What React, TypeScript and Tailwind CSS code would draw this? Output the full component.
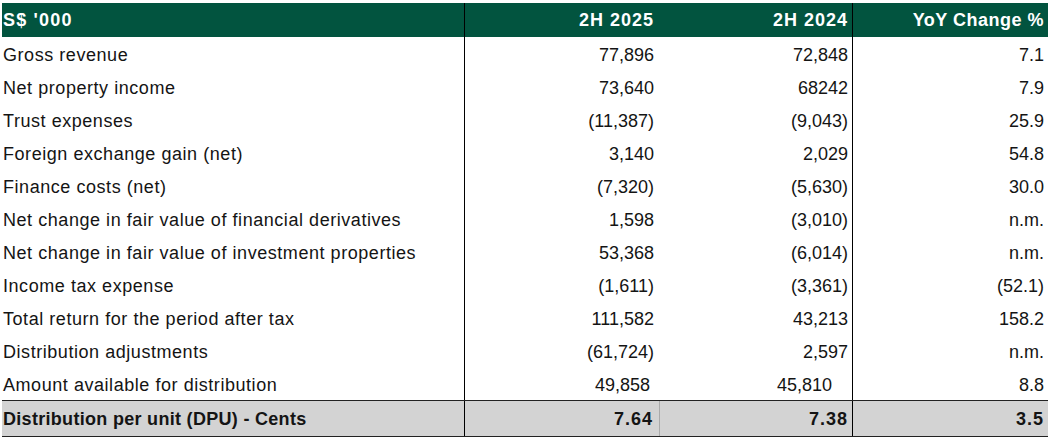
const rows: [string, string, string, string, string?][] = [
  ['Gross revenue', '77,896', '72,848', '7.1'],
  ['Net property income', '73,640', '68242', '7.9'],
  ['Trust expenses', '(11,387)', '(9,043)', '25.9'],
  ['Foreign exchange gain (net)', '3,140', '2,029', '54.8'],
  ['Finance costs (net)', '(7,320)', '(5,630)', '30.0'],
  ['Net change in fair value of financial derivatives', '1,598', '(3,010)', 'n.m.'],
  ['Net change in fair value of investment properties', '53,368', '(6,014)', 'n.m.'],
  ['Income tax expense', '(1,611)', '(3,361)', '(52.1)'],
  ['Total return for the period after tax', '111,582', '43,213', '158.2'],
  ['Distribution adjustments', '(61,724)', '2,597', 'n.m.'],
  ['Amount available for distribution', '49,858', '45,810', '8.8', 'pad'],
]

const grid = 'grid grid-cols-[463px_195px_193px_195px]'

export default function App() {
  return (
    <div className="min-h-screen bg-white pl-[2px] pt-[3px] font-['Liberation_Sans',Arial,sans-serif] text-[18px] text-[#141414]">
      <div className="w-[1046px]">
        {/* header */}
        <div className={`${grid} h-[34px] bg-[#02543f] font-bold text-white`}>
          <div className="flex items-center border-r border-black pl-[1px] pt-[1px] tracking-[1.2px]">S$ '000</div>
          <div className="flex items-center justify-end pr-[6px] pt-[1px] tracking-[1px]">2H 2025</div>
          <div className="flex items-center justify-end border-r border-black pr-[4px] pt-[1px] tracking-[1px]">2H 2024</div>
          <div className="flex items-center justify-end pr-[4px] pt-[1px] tracking-[0.5px]">YoY Change %</div>
        </div>

        {rows.map(([label, a, b, c, pad]) => (
          <div key={label} className={`${grid} h-[33px]`}>
            <div className="flex items-center border-r border-black pl-[1px] pt-[3px] tracking-[0.55px]">{label}</div>
            <div className={`flex items-center justify-end pt-[3px] ${pad ? 'pr-[10px]' : 'pr-[6px]'}`}>{a}</div>
            <div className={`flex items-center justify-end border-r border-black pt-[3px] ${pad ? 'pr-[20px]' : 'pr-[4px]'}`}>{b}</div>
            <div className="flex items-center justify-end pr-[4px] pt-[3px]">{c}</div>
          </div>
        ))}

        {/* DPU row */}
        <div className={`${grid} h-[37px] border-y border-[#222] bg-[#d3d3d3] font-bold`}>
          <div className="flex items-center border-r border-black pl-[1px] pt-[1px] tracking-[0.3px]">Distribution per unit (DPU) - Cents</div>
          <div className="flex items-center justify-end border-r border-[#aaa] pr-[6px] pt-[1px] tracking-[1px]">7.64</div>
          <div className="flex items-center justify-end border-r border-black pr-[4px] pt-[1px] tracking-[1px]">7.38</div>
          <div className="flex items-center justify-end pr-[4px] pt-[1px] tracking-[1px]">3.5</div>
        </div>
      </div>
    </div>
  )
}
